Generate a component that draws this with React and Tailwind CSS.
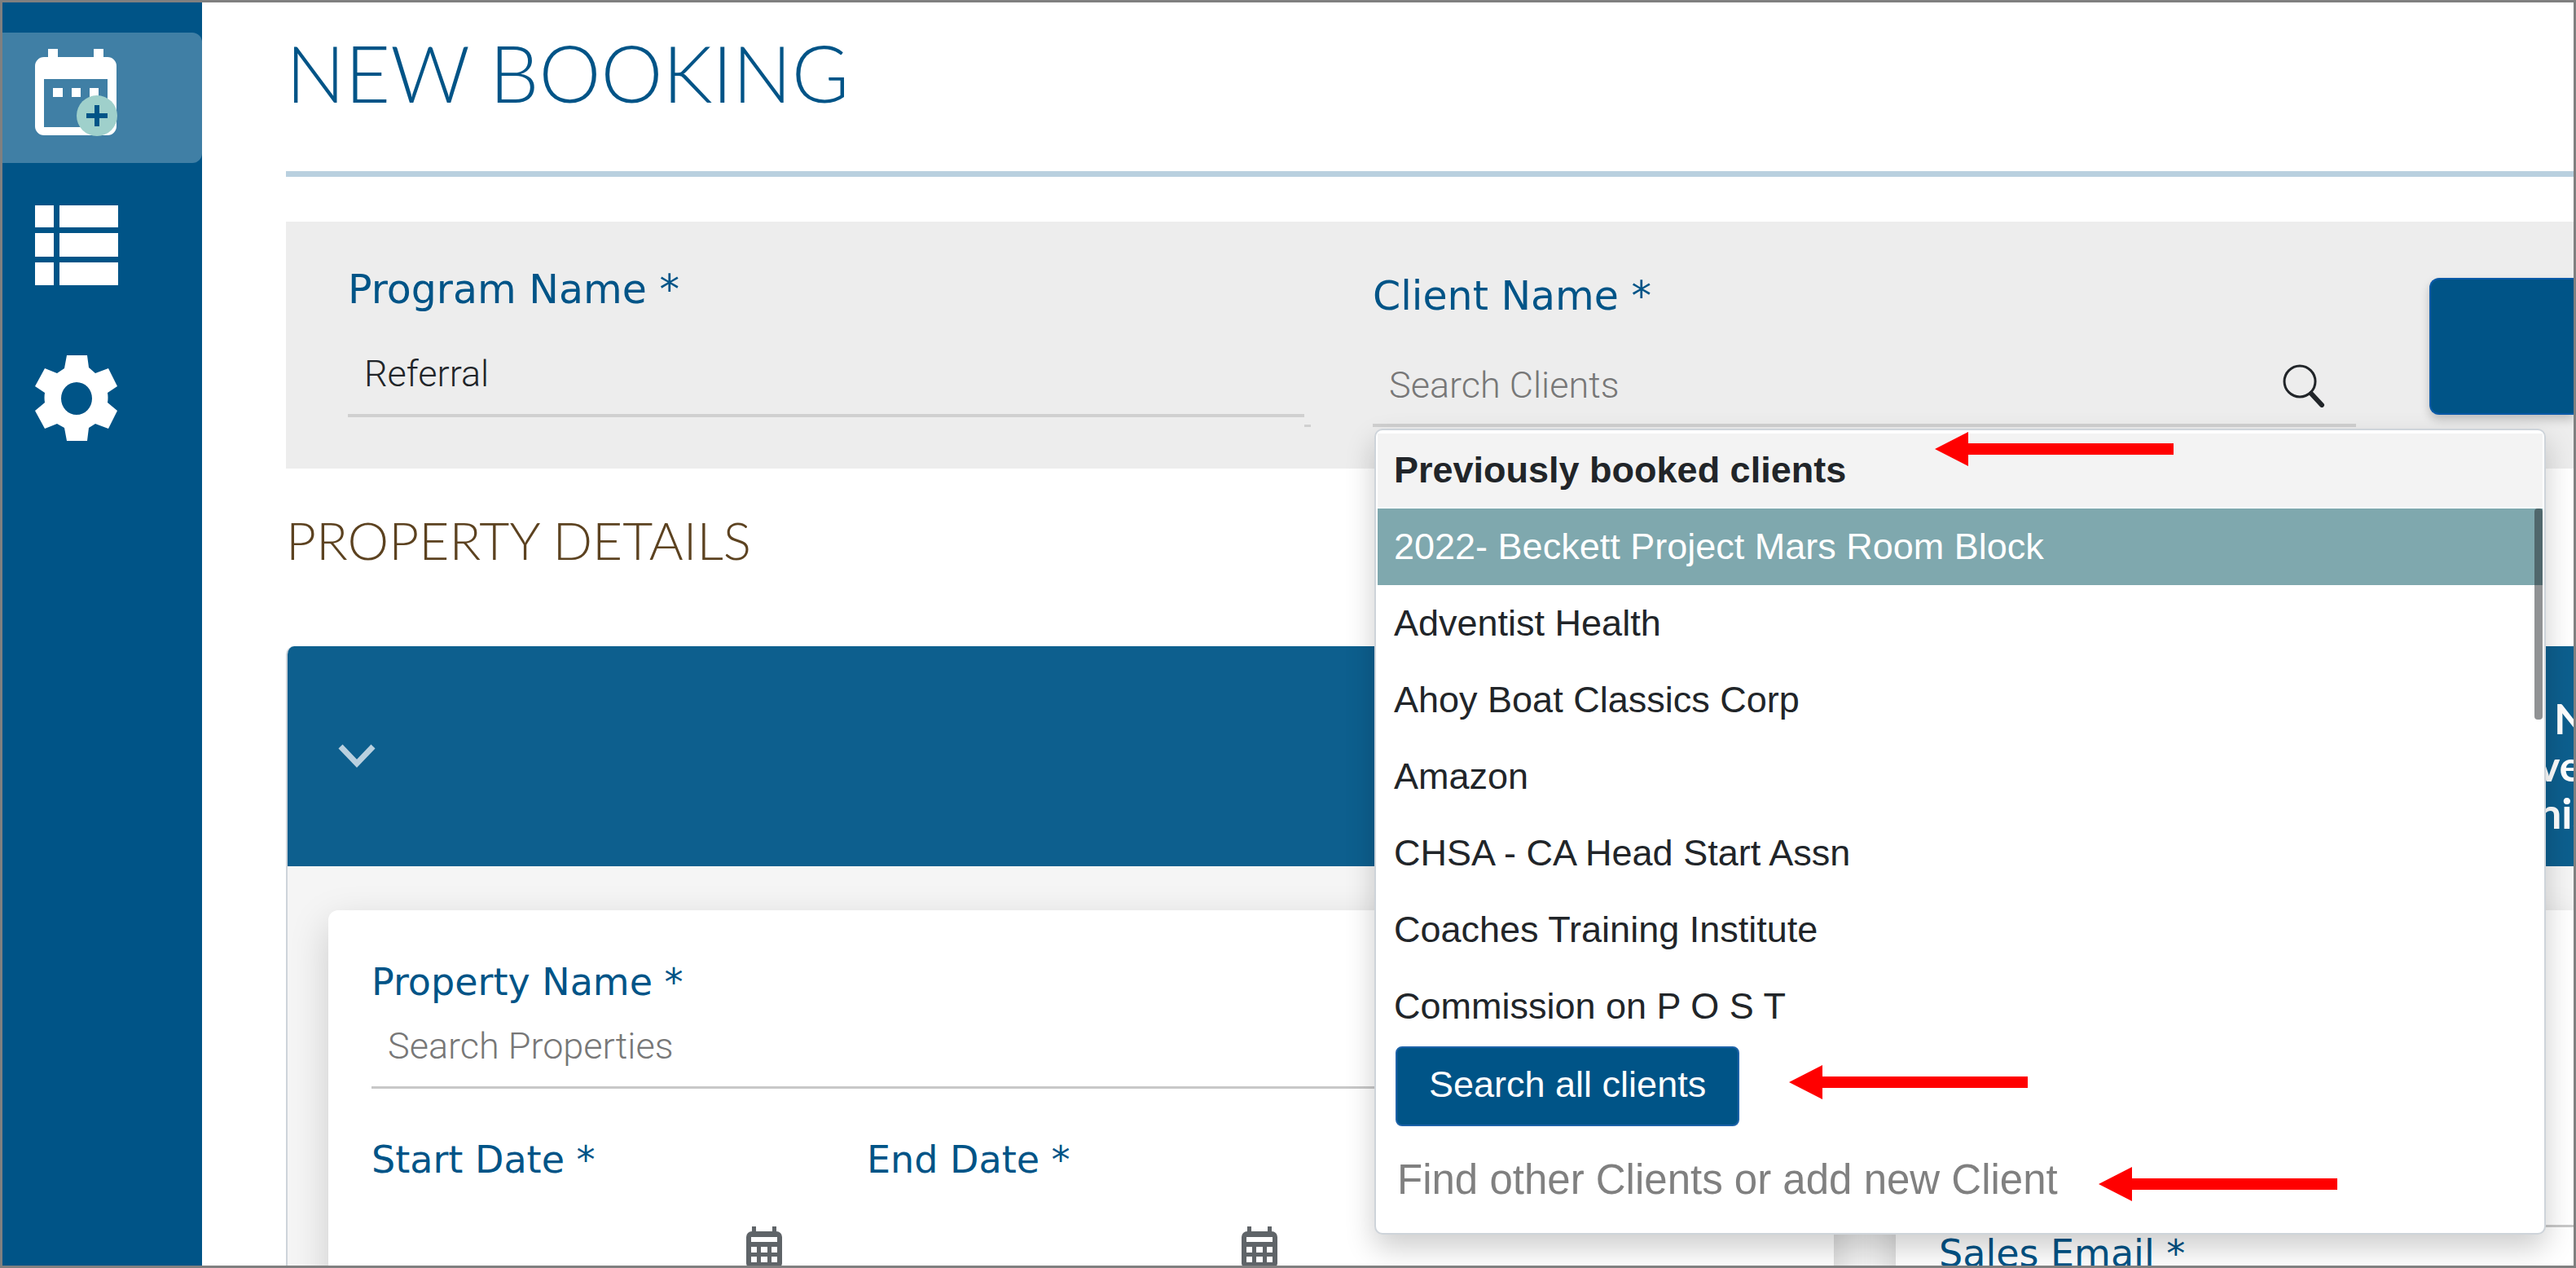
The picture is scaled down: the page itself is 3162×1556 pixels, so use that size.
const clients = [
  "2022- Beckett Project Mars Room Block",
  "Adventist Health",
  "Ahoy Boat Classics Corp",
  "Amazon",
  "CHSA - CA Head Start Assn",
  "Coaches Training Institute",
  "Commission on P O S T",
];

function BookingIcon() {
  return (
    <svg viewBox="0 0 102 107" className="h-[107px] w-[102px]" aria-hidden="true">
      <path fill="#fff" fillRule="evenodd" d="M16 0h12v10h44V0h12v10h5a11 11 0 0 1 11 11v74a11 11 0 0 1-11 11H11A11 11 0 0 1 0 95V21a11 11 0 0 1 11-11h5zM11 37v59h78V37z" />
      <path fill="#fff" d="M22 48h12v11H22zM45 48h11v11H45zM67 48h11v11H67z" />
      <circle cx="76" cy="82" r="25" fill="#9fd0cb" />
      <path d="M63 82h26M76 69v26" stroke="#005487" strokeWidth="6" />
    </svg>
  );
}

function ListIcon() {
  return (
    <svg viewBox="0 0 102 98" className="h-[98px] w-[102px]" fill="#fff" aria-hidden="true">
      <path d="M0 0h23v27H0zM30 0h72v27H30zM0 34h23v29H0zM30 34h72v29H30zM0 70h23v28H0zM30 70h72v28H30z" />
    </svg>
  );
}

function SettingsIcon() {
  return (
    <svg viewBox="0 0 102 107" className="h-[107px] w-[102px]" fill="#fff" aria-hidden="true">
      <path
        fillRule="evenodd"
        d="M39 1h25l2 15 8 7 16-6 11 22-12 8q1 6 0 12l12 10-11 22-16-6-8 5-2 16H39l-3-16-9-5-15 6L0 69l12-10q-1-6 0-12L0 39l12-22 15 6 9-6zM51 34a19 20 0 1 0 0 40 19 20 0 0 0 0-40z"
      />
    </svg>
  );
}

function CalendarIcon() {
  return (
    <svg viewBox="0 0 44 51" className="h-[51px] w-[44px]" aria-hidden="true">
      <path
        fill="#5f6468"
        fillRule="evenodd"
        d="M7 0h5v6h20V0h5v6a7 7 0 0 1 7 7v32a6 6 0 0 1-6 6H6a6 6 0 0 1-6-6V13a7 7 0 0 1 7-7zM6 13v6h32v-6zM6 25v7h7v-7zM18 25v7h8v-7zM31 25v7h7v-7zM6 37v7h7v-7zM18 37v7h8v-7zM31 37v7h7v-7z"
      />
    </svg>
  );
}

function Arrow({ className }) {
  return (
    <svg viewBox="0 0 293 42" className={"absolute h-[42px] w-[293px] " + className} aria-hidden="true">
      <path d="M0 21 41 0v14h252v14H41v14z" fill="#f00" />
    </svg>
  );
}

function DateField({ id, label }) {
  return (
    <div className="w-[504px]">
      <label htmlFor={id} className="block text-[46px] leading-[56px]">{label}</label>
      <div className="mt-[54px] flex h-[80px] items-start">
        <input id={id} className="min-w-0 flex-1 bg-transparent outline-none" />
        <button type="button" aria-label={"Choose " + label}><CalendarIcon /></button>
      </div>
    </div>
  );
}

function ClientMenu() {
  return (
    <div className="absolute top-[254px] left-[2px] z-10 w-[1438px] rounded-[10px] border-2 border-[#ced4da] bg-white p-[2px] font-['Liberation_Sans',sans-serif] text-[45px] text-[#212529] shadow-[0_16px_36px_rgba(0,0,0,0.2)]">
      <div className="relative h-[94px] border-y-2 border-white bg-[#f3f3f3] px-5 leading-[90px] font-bold">
        Previously booked clients
        <Arrow className="top-[-2px] left-[684px]" />
      </div>
      <ul role="listbox" aria-label="Clients" className="relative">
        {clients.map((name, i) => (
          <li
            key={name}
            role="option"
            aria-selected={i === 0}
            className={i === 0 ? "h-[94px] bg-[#7fa8ae] px-5 leading-[94px] text-white" : "h-[94px] px-5 leading-[94px]"}
          >
            {name}
          </li>
        ))}
        <span className="absolute top-0 right-0 h-[259px] w-[10px] rounded-[4px] bg-[#212529]/50" />
      </ul>
      <div className="relative mt-[2px]">
        <button type="button" className="ml-[22px] block h-[98px] rounded-[8px] border-2 border-[#1c62a8] bg-[#005487] px-[39px] pb-[4px] text-white">
          Search all clients
        </button>
        <Arrow className="top-[23px] left-[505px]" />
      </div>
      <div className="relative h-[129px] pt-[28px] pl-[24px] text-[51px] leading-[76px] text-[#808080]">
        Find other Clients or add new Client
        <Arrow className="top-[50px] left-[885px]" />
      </div>
    </div>
  );
}

export default function App() {
  return (
    <div className="flex h-screen overflow-hidden border-[3px] border-[#808080] bg-white font-['DejaVu_Sans',sans-serif] text-[#005487]">
      <nav className="w-[245px] shrink-0 bg-[#005487] pt-[37px]">
        <a href="#new" aria-label="New booking" className="flex h-[160px] items-start rounded-r-[12px] bg-[#407fa5] pt-[20px] pl-[40px]">
          <BookingIcon />
        </a>
        <a href="#list" aria-label="Bookings" className="mt-[52px] block pl-[40px]">
          <ListIcon />
        </a>
        <a href="#settings" aria-label="Settings" className="mt-[85px] block pl-[40px]">
          <SettingsIcon />
        </a>
      </nav>

      <main className="min-w-0 flex-1 pl-[103px]">
        <h1 className="h-[207px] pt-[26px] font-['Lato',sans-serif] text-[96px] leading-[120px] font-light">NEW BOOKING</h1>
        <hr className="h-[7px] border-0 bg-[#b9d0df]" />

        <section className="mt-[55px] flex h-[303px] items-start bg-[#ededed] pl-[76px]">
          <div className="w-[1174px] shrink-0 pt-[56px]">
            <label htmlFor="program" className="block text-[49px] leading-[56px]">Program Name *</label>
            <input id="program" defaultValue="Referral" className="mt-[22px] block h-[106px] w-full border-b-4 border-[#d0d0d0] bg-transparent px-5 pt-[2px] font-['Roboto',sans-serif] text-[45px] font-light text-[#212529] outline-none" />
          </div>
          <span className="mt-[249px] h-[3px] w-[8px] shrink-0 bg-[#d0d0d0]" />
          <div className="relative ml-[76px] w-[1207px] shrink-0 pt-[64px]">
            <label htmlFor="client" className="block text-[49px] leading-[56px]">Client Name *</label>
            <div className="mt-[26px] flex h-[106px] items-center border-b-4 border-[#d0d0d0] pt-2 pr-[38px] pl-5">
              <input id="client" placeholder="Search Clients" className="min-w-0 flex-1 bg-transparent font-['Roboto',sans-serif] text-[45px] font-light outline-none placeholder:text-[#777]" />
              <button type="button" aria-label="Search">
                <svg viewBox="0 0 52 54" className="h-[54px] w-[52px]" fill="none" stroke="#212529" aria-hidden="true">
                  <circle cx="21" cy="22" r="19" strokeWidth="3" />
                  <path d="m35 37 13 14" strokeWidth="6" strokeLinecap="round" />
                </svg>
              </button>
            </div>
            <ClientMenu />
          </div>
          <button type="button" aria-label="Save booking" className="mt-[69px] ml-[90px] h-[168px] min-w-0 flex-1 rounded-l-[12px] border-2 border-r-0 border-[#0a5aa8] bg-[#005487] shadow-[0_6px_12px_rgba(0,0,0,0.2)]" />
        </section>

        <h2 className="h-[218px] pt-[46px] font-['Lato',sans-serif] text-[64px] leading-[84px] font-light text-[#5c4220]">PROPERTY DETAILS</h2>

        <section className="overflow-hidden rounded-tl-[10px] border-l-2 border-[#ced4da] bg-[#f5f5f5]">
          <header className="flex h-[270px] items-center justify-between bg-[#0d5f8e] pl-[62px] text-white">
            <button type="button" aria-label="Collapse property">
              <svg viewBox="0 0 46 30" className="h-[30px] w-[46px]" fill="none" stroke="#b9d0df" strokeWidth="7" aria-hidden="true">
                <path d="m3 3 20 21L43 3" />
              </svg>
            </button>
            <div className="w-[44px] overflow-hidden pt-[22px] font-['Lato',sans-serif] text-[52px] leading-[58px] font-bold">
              <p className="pl-[20px]">N</p>
              <p>ve</p>
              <p>nis</p>
            </div>
          </header>
          <div className="flex gap-[76px] pt-[54px] pl-[50px]">
            <div className="h-[500px] w-[1848px] shrink-0 rounded-[12px] bg-white pt-[60px] pl-[53px] shadow-[0_16px_48px_rgba(0,0,0,0.17)]">
              <label htmlFor="property" className="block text-[46px] leading-[56px]">Property Name *</label>
              <input id="property" placeholder="Search Properties" className="block h-[103px] w-[1740px] border-b-[3px] border-[#c8c8c8] bg-transparent px-5 font-['Roboto',sans-serif] text-[45px] font-light outline-none placeholder:text-[#777]" />
              <div className="mt-[59px] flex gap-[104px]">
                <DateField id="start" label="Start Date *" />
                <DateField id="end" label="End Date *" />
              </div>
            </div>
            <div className="h-[500px] min-w-0 flex-1 rounded-l-[12px] bg-white pt-[386px] pl-[53px] shadow-[0_16px_48px_rgba(0,0,0,0.17)]">
              <label htmlFor="email" className="block border-t-[3px] border-[#c8c8c8] pt-[4px] text-[46px] leading-[56px]">Sales Email *</label>
              <input id="email" type="email" className="block h-[50px] w-full bg-transparent outline-none" />
            </div>
          </div>
        </section>
      </main>
    </div>
  );
}
